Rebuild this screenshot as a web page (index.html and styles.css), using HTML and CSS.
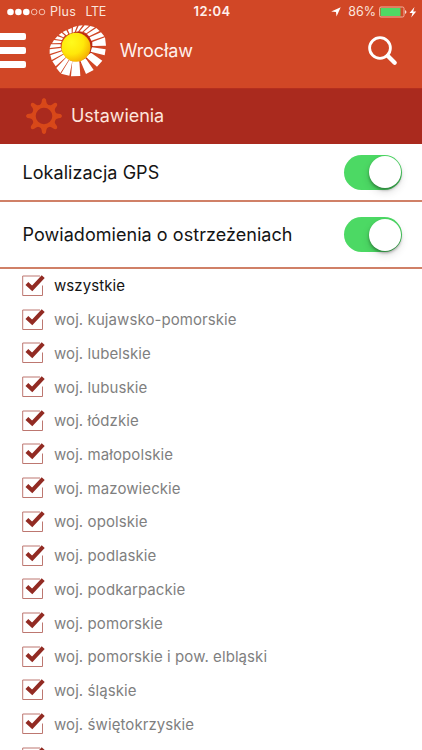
FILE: index.html
```
<!DOCTYPE html>
<html lang="pl">
<head>
<meta charset="utf-8">
<title>Ustawienia</title>
<link rel="stylesheet" href="styles.css">
</head>
<body>
<svg class="defs" width="0" height="0"><defs>
<symbol id="check" viewBox="0 0 24 24"><path d="M20.5 11.5V21.5H.7V2H18" fill="none" stroke="#bd7770"/><path d="M4.9 9.4 10.2 14.4 21.2 2.6" fill="none" stroke="#922b23" stroke-width="4.1"/></symbol>
</defs></svg>
<header class="top">
  <div class="status">
    <div class="carrier">
      <svg width="39" height="8" viewBox="0 0 39 8"><g fill="#fff"><circle cx="3.5" cy="4" r="3.3"/><circle cx="11.4" cy="4" r="3.3"/><circle cx="19.3" cy="4" r="3.3"/></g><g fill="none" stroke="#f6c9bb" stroke-width=".9"><circle cx="27.2" cy="4" r="2.8"/><circle cx="35" cy="4" r="2.8"/></g></svg>
      <span class="plus">Plus</span><span class="lte">LTE</span>
    </div>
    <span class="time">12:04</span>
    <div class="power">
      <svg class="loc" width="10" height="10" viewBox="0 0 10 10"><path d="M9.7.3 5.5 9.6 5 5 .2 4.6z" fill="#fff"/></svg>
      <span class="pct">86%</span>
      <svg width="38" height="12" viewBox="0 0 38 12"><rect x=".5" y="1" width="24.5" height="10" rx="1.5" fill="none" stroke="#f6c0ae" stroke-width=".9"/><rect x="1.5" y="2" width="20" height="8" rx=".5" fill="#4fd964"/><path d="M26 4q3 2 0 4z" fill="#f9ddd4"/><path d="m35.5 1-5 6h3l-1.3 4.4 5-6h-3z" fill="#fff"/></svg>
    </div>
  </div>
  <div class="nav">
    <div class="menu"><i></i><i></i><i></i></div>
    <svg class="sun" width="58" height="53" viewBox="26 12 174 159">
      <defs><radialGradient id="sunFill" cx=".35" cy=".32" r=".75"><stop offset="0" stop-color="#fffa1d"/><stop offset=".55" stop-color="#ffe80a"/><stop offset="1" stop-color="#f5a900"/></radialGradient></defs>
      <ellipse cx="111" cy="82" rx="47" ry="47" fill="#b92913"/>
      <path fill="#fff" d="M96 124 117 122 120 168 92 169zM120 122 136 115 160 150 137 162zM136 110 152 98 186 122 170 140zM151 95 155 82 196 88 193 106zM156 78 156 66 194 52 197 77zM153 62 148 52 182 37 192 49zM146 49 140 42 168 24 178 33zM138 40 130 36 150 18 164 22zM126 35 118 34 133 16 146 17zM114 34 107 35 115 17 127 16zM103 36 97 38 98 22 110 18zM94 39 88 41 82 29 94 24zM84 42 78 46 67 36 78 31zM74 47 69 52 55 45 64 38zM68 54 65 60 44 57 51 49zM64 63 62 69 35 70 41 60zM61 73 61 80 28 84 32 73zM62 84 64 91 28 102 28 88zM65 94 69 101 34 120 30 106zM71 103 78 110 46 139 36 124zM79 111 87 117 60 159 48 144zM87 120 96 123 87 167 62 161z"/>
      <circle cx="107" cy="82" r="43.5" fill="url(#sunFill)"/>
    </svg>
    <h1 class="city">Wrocław</h1>
    <svg class="search" width="32" height="32" viewBox="0 0 32 32" fill="none" stroke="#fff"><circle cx="13" cy="13" r="10.4" stroke-width="2.8"/><path d="m20.7 20.8 7 7" stroke-width="4.3" stroke-linecap="round"/></svg>
  </div>
</header>
<section class="title">
  <svg class="gear" width="36" height="36" viewBox="-18 -18 36 36">
    <g fill="#d84819"><path id="tooth" d="M-4.8-10.5C-2.4-12-2.4-13.5-2-16.5Q0-19.5 2-16.5C2.4-13.5 2.4-12 4.8-10.5z"/>
    <use href="#tooth" transform="rotate(45)"/><use href="#tooth" transform="rotate(90)"/><use href="#tooth" transform="rotate(135)"/><use href="#tooth" transform="rotate(180)"/><use href="#tooth" transform="rotate(225)"/><use href="#tooth" transform="rotate(270)"/><use href="#tooth" transform="rotate(315)"/></g>
    <circle r="10.2" fill="none" stroke="#d84819" stroke-width="3.8"/>
  </svg>
  <h2>Ustawienia</h2>
</section>
<main>
  <div class="setting gps"><span>Lokalizacja GPS</span><div class="switch"></div></div>
  <div class="setting alerts"><span>Powiadomienia o ostrzeżeniach</span><div class="switch"></div></div>
  <ul class="regions">
    <li class="all"><svg><use href="#check"/></svg><span>wszystkie</span></li>
    <li><svg><use href="#check"/></svg><span>woj. kujawsko-pomorskie</span></li>
    <li><svg><use href="#check"/></svg><span>woj. lubelskie</span></li>
    <li><svg><use href="#check"/></svg><span>woj. lubuskie</span></li>
    <li><svg><use href="#check"/></svg><span>woj. łódzkie</span></li>
    <li><svg><use href="#check"/></svg><span>woj. małopolskie</span></li>
    <li><svg><use href="#check"/></svg><span>woj. mazowieckie</span></li>
    <li><svg><use href="#check"/></svg><span>woj. opolskie</span></li>
    <li><svg><use href="#check"/></svg><span>woj. podlaskie</span></li>
    <li><svg><use href="#check"/></svg><span>woj. podkarpackie</span></li>
    <li><svg><use href="#check"/></svg><span>woj. pomorskie</span></li>
    <li><svg><use href="#check"/></svg><span>woj. pomorskie i pow. elbląski</span></li>
    <li><svg><use href="#check"/></svg><span>woj. śląskie</span></li>
    <li><svg><use href="#check"/></svg><span>woj. świętokrzyskie</span></li>
    <li><svg><use href="#check"/></svg></li>
  </ul>
</main>
</body>
</html>
```
FILE: styles.css
```
* { box-sizing: border-box; }
html, body { height: 750px; overflow: hidden; }
body { margin: 0; background: #fff; font-family: Inter, "Liberation Sans", sans-serif; color: #141414; display: flex; flex-direction: column; }
h1, h2 { margin: 0; font-weight: 400; }
svg { display: block; flex: none; }
.defs { position: absolute; }
.top { flex: none; height: 88px; background: #d14726; color: #fff; }
.status { height: 23px; padding: 0 5px 0 7px; display: grid; grid-template-columns: 1fr auto 1fr; align-items: center; font-size: 12.5px; line-height: 23px; color: #fbe4dc; }
.carrier, .power { display: flex; align-items: center; }
.plus { margin-left: 4px; letter-spacing: .25px; }
.lte { margin-left: 9.5px; letter-spacing: -.4px; }
.time { font-weight: 600; font-size: 13px; letter-spacing: .4px; color: #fff0eb; }
.power { justify-content: flex-end; }
.pct { margin: 0 3px 0 7px; }
.nav { height: 65px; display: flex; align-items: flex-start; }
.menu { width: 26px; margin-top: 10px; display: flex; flex-direction: column; gap: 7px; }
.menu i { height: 7px; background: #fff; border-radius: 0 2px 2px 0; }
.sun { margin: 1px 0 0 22.7px; }
.city { margin-left: 13px; font-size: 18px; line-height: 56px; letter-spacing: -.1px; color: #fff1ec; }
.search { margin: 12px 23px 0 auto; }
.title { flex: none; height: 56px; background: #aa2a1e; border-top: 1px solid #b42e1e; display: flex; align-items: center; padding: 0 0 2px 26px; }
.title h2 { margin-left: 9px; font-size: 18px; letter-spacing: -.05px; color: #fde5dc; }
.setting { display: flex; align-items: center; justify-content: space-between; padding: 0 20px 0 22.5px; font-size: 18px; letter-spacing: .05px; border-bottom: 2px solid #d08067; }
.gps { height: 58px; }
.alerts { height: 67px; }
.switch { width: 58px; height: 35px; border-radius: 18px; background: #4cd964; padding: 1.5px; display: flex; justify-content: flex-end; }
.switch::after { content: ""; width: 32px; height: 32px; border-radius: 50%; background: #fff; box-shadow: 0 2px 3px #0005, 0 4px 8px #0002; }
.regions { list-style: none; margin: 0; padding: 0; }
.regions li { height: 33.73px; display: flex; align-items: center; padding-left: 22px; font-size: 15px; letter-spacing: .08px; color: #7f7f7f; }
.regions svg { width: 24px; height: 24px; }
.regions span { margin-left: 8px; white-space: nowrap; }
.regions .all { color: #141414; }
```
